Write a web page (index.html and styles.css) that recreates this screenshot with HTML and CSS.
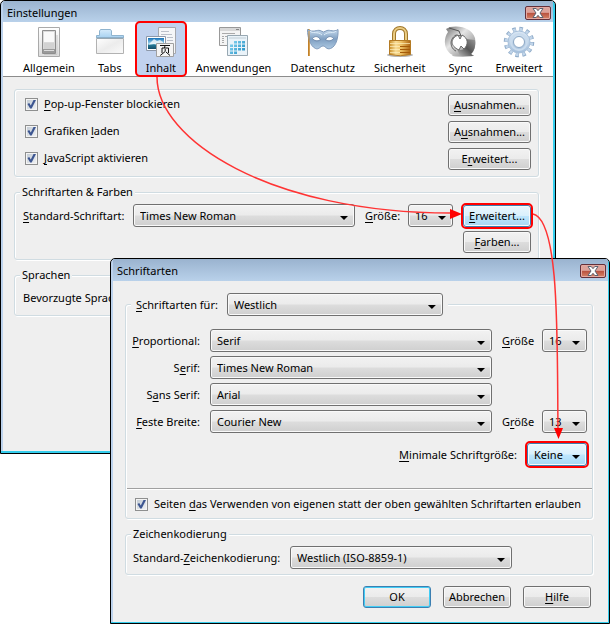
FILE: index.html
```html
<!DOCTYPE html>
<html lang="de">
<head>
<meta charset="utf-8">
<title>Einstellungen</title>
<link rel="stylesheet" href="styles.css">
</head>
<body>
<main class="desktop">
  <section class="window window-settings" aria-label="Einstellungen">
    <header class="titlebar">
      <h1>Einstellungen</h1>
      <button class="close" aria-label="Schließen"><svg width="12" height="10" viewBox="0 0 12 10"><path d="M1 .5h3.2L6 2.7 7.8.5H11L8 5l3 4.500H7.800L6 7.300 4.200 9.500H1L4 5z" fill="#fff" stroke="#5c6270"/></svg></button>
    </header>
    <nav class="toolbar">
      <button class="tool">
        <svg width="32" height="32" viewBox="0 0 32 32"><defs><linearGradient id="g1" x2="0" y2="1"><stop stop-color="#fff"/><stop offset="1" stop-color="#dcdcdc"/></linearGradient></defs><path d="M5.500 1.500h21v29h-21z" fill="url(#g1)" stroke="#aaa"/><path d="M9.500 4.500h13v23h-13z" fill="#dadada" stroke="#8e8e8e"/><path d="M11 6h10v10H11z" fill="#f9f9f9"/><path d="M11 17h10v6H11z" fill="#d2d2d2"/><path d="M10 23h12v4H10z" fill="#9a9a9a"/><path d="M11 24.500h10" stroke="#ddd"/><path d="M11 28.500h13V9" fill="none" stroke="#c9c9c9"/></svg>
        <span>Allgemein</span>
      </button>
      <button class="tool">
        <svg width="32" height="32" viewBox="0 0 32 32"><defs><linearGradient id="g2" x2="1" y2="1"><stop stop-color="#fff"/><stop offset=".5" stop-color="#ececec"/><stop offset="1" stop-color="#fafafa"/></linearGradient><linearGradient id="g2b" x2="0" y2="1"><stop stop-color="#d5ebfb"/><stop offset="1" stop-color="#a5d0f0"/></linearGradient></defs><path d="M2.500 12V9.500h3V5l1-1.500h10l1 1.500v4.500h12V12z" fill="url(#g2b)" stroke="#8fb4cf"/><path d="M2.500 12.500h27v15h-27z" fill="url(#g2)" stroke="#b2b2b2"/><path d="M3 12h26" stroke="#7f9db4"/></svg>
        <span>Tabs</span>
      </button>
      <button class="tool tool-active">
        <svg width="32" height="32" viewBox="0 0 32 32"><defs><linearGradient id="g3" x2="0" y2="1"><stop stop-color="#1771b8"/><stop offset=".55" stop-color="#a8dcf2"/><stop offset=".6" stop-color="#267b99"/><stop offset="1" stop-color="#134c68"/></linearGradient></defs><path d="M13.500 1.500h17v26h-17z" fill="#f5f6f8" stroke="#a6a8ae"/><path d="M16 5.500h8M16 8.500h11M22 11.500h6M22 14.500h6" stroke="#bcc0ca"/><path d="M1.500 10.500h19v14h-19z" fill="#fff" stroke="#8d98aa"/><path d="M3 12h16v11H3z" fill="url(#g3)"/><path d="M6 16l3-3 3 2 3-1 3 2v2l-5 1-4-1-6 1z" fill="#fff" opacity=".75"/><path d="M11.500 17.500h17v13h-17z" fill="#f4f4f4" stroke="#a0a0a0"/><path d="M15 19.500h10M20 19.500l-.5 2.500M17 27v-5h6.500v5M20.200 23v2.500l-5 4M21 26l4 3.500" fill="none" stroke="#111"/></svg>
        <span>Inhalt</span>
      </button>
      <button class="tool">
        <svg width="32" height="32" viewBox="0 0 32 32"><defs><linearGradient id="g4" x1="11" y1="15" x2="28" y2="29" gradientUnits="userSpaceOnUse"><stop stop-color="#8edaf5"/><stop offset="1" stop-color="#1686bd"/></linearGradient></defs><path d="M1.500 1.500h21v18h-21z" fill="#f4f4f4" stroke="#999"/><path d="M2 2h20v3H2z" fill="#d8d8d8"/><path d="M18 3.500h3" stroke="#888"/><path d="M4 7.500h13M4 10.500h2M7 10.500h4M4 12.500h2M4 14.500h2M4 16.500h2" stroke="#aaa"/><path d="M9.500 9.500h20v20h-20z" fill="#eaf3f9" stroke="#98a8b2"/><path d="M11 11h17v2H11z" fill="#d5e0e7"/><path d="M16 16.200h11M12 19.700h15M12 23.200h15M12 26.700h8" stroke="url(#g4)" stroke-width="2.500" stroke-dasharray="3 1"/></svg>
        <span>Anwendungen</span>
      </button>
      <button class="tool">
        <svg width="34" height="32" viewBox="0 0 34 32"><defs><linearGradient id="g5" x2="0" y2="1"><stop stop-color="#c7daed"/><stop offset=".5" stop-color="#7f9fc2"/><stop offset="1" stop-color="#adc9e2"/></linearGradient></defs><path d="M3 3v27" stroke="#b97822" stroke-width="2"/><path d="M3.500 3v27" stroke="#e2b568"/><path d="M1.500 3.500C7 7 11 3.500 14 4.500l3.500 1.500L21 4.500c3-1 7 2 11-1 .5 7-1.500 17-7.500 19-4 1.500-5-2.500-7.500-2.500s-4 4-7.500 2.500C4 20 1.500 11 1.500 3.500z" fill="url(#g5)" stroke="#7f9abb"/><path d="M6.500 12.500c2.500-3 6-2.500 8 1.500-3.500 1.500-6 1-8-1.500zM27.500 12.500c-2.500-3-6-2.500-8 1.500 3.500 1.500 6 1 8-1.500z" fill="#fff" stroke="#6c88ab"/><path d="M4 5c2 3 8 0 12 4M30 5c-2 3-8 0-12 4" fill="none" stroke="#dcebf8"/><path d="M3 5v25" stroke="#c98a35"/></svg>
        <span>Datenschutz</span>
      </button>
      <button class="tool">
        <svg width="32" height="32" viewBox="0 0 32 32"><defs><linearGradient id="g6"><stop stop-color="#c98e28"/><stop offset=".3" stop-color="#f7dc96"/><stop offset=".55" stop-color="#eec266"/><stop offset="1" stop-color="#ad6410"/></linearGradient></defs><ellipse cx="16" cy="29" rx="13" ry="2" fill="#b6b6b6"/><path d="M10 16V8c0-8 12-8 12 0v8" fill="none" stroke="#a0772b" stroke-width="4"/><path d="M10 16V8c0-8 12-8 12 0v8" fill="none" stroke="#eacb82" stroke-width="2"/><path d="M5.500 14.500h21v14q-10 2.500-21 0z" fill="url(#g6)" stroke="#b47b24"/><path d="M6 17.500h20M6 20.500h20M6 23.500h20M6 26.500h20" stroke="#fff0bd" opacity=".7"/><path d="M16 20.500h10M16 23.500h10M16 26.500h10" stroke="#a55b09"/></svg>
        <span>Sicherheit</span>
      </button>
      <button class="tool">
        <svg width="32" height="32" viewBox="0 0 32 32"><defs><linearGradient id="g7" x2="1" y2="1"><stop stop-color="#686868"/><stop offset=".4" stop-color="#e6e6e6"/><stop offset="1" stop-color="#777"/></linearGradient><linearGradient id="g7b" x1="1" x2="0" y2="1"><stop stop-color="#999"/><stop offset=".5" stop-color="#555"/><stop offset="1" stop-color="#bbb"/></linearGradient></defs><ellipse cx="19" cy="29.500" rx="11" ry="1.500" fill="#bbb"/><path d="M16 30C2 31-3 16 4 6L2 3l4-2C18-1 28 3 31 12c1 7 0 13-4 16l3 2z" fill="url(#g7)"/><path d="M31 14c1 6-1 11-4 14l2 2H16l-3-7 3 1c6 0 8-6 6-11z" fill="url(#g7b)"/><path d="M5 2l10 3 2 5-5-1C4 14 7 23 12 25" fill="none" stroke="#555"/><path d="M14 9l2 4 2-4c6 3 7 9 2 14l-3-3-2 4c-9-4-9-11-1-15z" fill="#fff" stroke="#666"/></svg>
        <span>Sync</span>
      </button>
      <button class="tool">
        <svg width="32" height="32" viewBox="0 0 32 32"><defs><linearGradient id="g8" x2="0" y2="1"><stop stop-color="#dbe8f5"/><stop offset="1" stop-color="#a3bedb"/></linearGradient></defs><g fill="none"><circle cx="16" cy="16" r="13" stroke="#8fabc8" stroke-width="4.500" stroke-dasharray="3.400 3.407"/><circle cx="16" cy="16" r="12.500" stroke="#c1d5ea" stroke-width="3.500" stroke-dasharray="2.400 4.145" stroke-dashoffset="-.5"/></g><circle cx="16" cy="16" r="11" fill="url(#g8)" stroke="#a8c0da"/><circle cx="16" cy="16" r="8" fill="none" stroke="#c9dbed" stroke-width="2"/><circle cx="16" cy="16" r="5.500" fill="#fff" stroke="#8ba7c4"/></svg>
        <span>Erweitert</span>
      </button>
    </nav>
    <div class="pane">
      <fieldset class="group group-plain">
        <div class="option-row"><label class="check"><input type="checkbox" checked><span><u>P</u>op-up-Fenster blockieren</span></label><button class="btn btn-wide"><span><u>A</u>usnahmen...</span></button></div>
        <div class="option-row"><label class="check"><input type="checkbox" checked><span>Grafiken <u>l</u>aden</span></label><button class="btn btn-wide"><span>A<u>u</u>snahmen...</span></button></div>
        <div class="option-row"><label class="check"><input type="checkbox" checked><span><u>J</u>avaScript aktivieren</span></label><button class="btn btn-wide"><span>E<u>r</u>weitert...</span></button></div>
      </fieldset>
      <fieldset class="group">
        <legend>Schriftarten &amp; Farben</legend>
        <div class="font-grid">
          <label for="std-font"><u>S</u>tandard-Schriftart:</label>
          <div class="select"><select id="std-font"><option>Times New Roman</option></select></div>
          <label for="std-size"><u>G</u>röße:</label>
          <div class="select"><select id="std-size"><option>16</option></select></div>
          <button class="btn btn-hot marked"><span><u>E</u>rweitert...</span></button>
          <button class="btn last-column"><span><u>F</u>arben...</span></button>
        </div>
      </fieldset>
      <fieldset class="group">
        <legend>Sprachen</legend>
        <div class="text-row">Bevorzugte Sprachen</div>
      </fieldset>
    </div>
  </section>

  <section class="window window-fonts" aria-label="Schriftarten">
    <header class="titlebar">
      <h2>Schriftarten</h2>
      <button class="close" aria-label="Schließen"><svg width="12" height="10" viewBox="0 0 12 10"><path d="M1 .5h3.200L6 2.700 7.800.5H11L8 5l3 4.500H7.800L6 7.300 4.200 9.500H1L4 5z" fill="#fff" stroke="#5c6270"/></svg></button>
    </header>
    <div class="pane pane-fonts">
      <fieldset class="group">
        <legend class="legend-select">
          <label for="script"><u>S</u>chriftarten für:</label>
          <span class="select"><select id="script"><option>Westlich</option></select></span>
        </legend>
        <div class="family-grid">
          <label class="family" for="prop"><u>P</u>roportional:</label>
          <div class="select"><select id="prop"><option>Serif</option></select></div>
          <label for="prop-size"><u>G</u>röße</label>
          <div class="select"><select id="prop-size"><option>16</option></select></div>
          <label class="family" for="serif">S<u>e</u>rif:</label>
          <div class="select"><select id="serif"><option>Times New Roman</option></select></div>
          <label class="family" for="sans">S<u>a</u>ns Serif:</label>
          <div class="select"><select id="sans"><option>Arial</option></select></div>
          <label class="family" for="mono"><u>F</u>este Breite:</label>
          <div class="select"><select id="mono"><option>Courier New</option></select></div>
          <label for="mono-size">G<u>r</u>öße</label>
          <div class="select"><select id="mono-size"><option>13</option></select></div>
        </div>
        <div class="minimum-row">
          <label for="min-size"><u>M</u>inimale Schriftgröße:</label>
          <div class="select select-hot marked"><select id="min-size"><option>Keine</option></select></div>
        </div>
        <hr>
        <div class="option-row allow-row"><label class="check"><input type="checkbox" checked><span>Seiten <u>d</u>as Verwenden von eigenen statt der oben gewählten Schriftarten erlauben</span></label></div>
      </fieldset>
      <fieldset class="group">
        <legend>Zeichenkodierung</legend>
        <div class="encoding-row">
          <label for="enc">Standard-<u>Z</u>eichenkodierung:</label>
          <div class="select"><select id="enc"><option>Westlich (ISO-8859-1)</option></select></div>
        </div>
      </fieldset>
      <footer class="actions">
        <button class="btn btn-default">OK</button>
        <button class="btn">Abbrechen</button>
        <button class="btn"><span><u>H</u>ilfe</span></button>
      </footer>
    </div>
  </section>

  <svg class="arrows" width="610" height="624" viewBox="0 0 610 624" aria-hidden="true">
    <path d="M157 77C157 140 270 213 451 213M533 214C560 220 557 340 558 430" fill="none" stroke="#f33" stroke-width="1.500"/>
    <path d="M450 209v10l12-5zM554 428h9l-4.500 11z" fill="#f00"/>
  </svg>
</main>
</body>
</html>
```
FILE: styles.css
```css
* {
  box-sizing: border-box;
}

body {
  margin: 0;
  background: #fff;
  color: #000;
  font: 11px/16px "Noto Sans", "Open Sans", sans-serif;
}

button,
select,
input {
  font: inherit;
  color: inherit;
  margin: 0;
}

u {
  text-underline-offset: 2px;
  text-decoration-skip-ink: none;
}

.desktop {
  position: relative;
  min-height: 100vh;
}

.window {
  position: absolute;
  border: 1px solid #000;
  border-radius: 5px 5px 0 0;
  background: #efefef;
  box-shadow: inset -2px -2px #35cdec, inset 2px 0 #bcd2ec;
  padding: 0 2px 2px;
  overflow: hidden;
}

.window-settings {
  top: 0;
  left: 0;
  right: 54px;
}

.window-fonts {
  top: 258px;
  left: 110px;
  right: 0;
  padding-right: 1px;
  padding-bottom: 1px;
  box-shadow: inset -1px -1px #35cdec, inset 2px 0 #bcd2ec;
}

.titlebar {
  display: flex;
  justify-content: space-between;
  align-items: center;
  height: 22px;
  padding: 2px 2px 0 4px;
  background: linear-gradient(#9ab3cf, #b9d1ea);
}

.window-settings .titlebar {
  height: 21px;
}

.titlebar h1,
.titlebar h2 {
  margin: 0;
  font-size: 11px;
  font-weight: 400;
}

.close {
  display: flex;
  align-items: center;
  justify-content: center;
  width: 26px;
  height: 14px;
  padding: 0;
  border: 1px solid #63303a;
  border-radius: 2px;
  box-shadow: inset 0 0 0 1px #e5aaa2;
  background: linear-gradient(#dda39b 45%, #b8503e 50%, #d78569);
}

.toolbar {
  display: flex;
  gap: 1px;
  height: 55px;
  padding-left: 11px;
  background: #fff;
  border-bottom: 1px solid #8c8c8c;
}

.tool {
  display: flex;
  flex-direction: column;
  align-items: center;
  flex: none;
  min-width: 50px;
  height: 54px;
  padding: 4px 9px 0;
  border: 0;
  background: none;
}

.tool span {
  margin-top: 2px;
}

.tool-active {
  background: #c1d2ee;
  border-radius: 4px;
  outline: 2px solid #f00;
  outline-offset: -1px;
}

.pane {
  min-height: 374px;
  padding: 12px 14px 0 11px;
}

.pane-fonts {
  min-height: 0;
  padding: 12px 15px 14px 12px;
}

.group {
  min-width: 0;
  margin: 0 0 7px;
  padding: 4px 0 6px 1px;
  border: 1px solid #d0dce2;
  border-radius: 3px;
  box-shadow: inset 1px 1px #fff, 1px 1px #fff;
}

legend {
  margin-left: 4px;
  padding: 0 2px;
  background: #efefef;
}

.option-row {
  display: flex;
  justify-content: space-between;
  align-items: center;
  height: 22px;
  padding: 0 7px 0 9px;
}

.option-row + .option-row {
  margin-top: 5px;
}

.check {
  display: flex;
  align-items: center;
  gap: 6px;
  height: 20px;
  align-self: flex-start;
  white-space: nowrap;
}

.check input {
  appearance: none;
  position: relative;
  width: 13px;
  height: 13px;
  border: 1px solid #8e8f8f;
  background: linear-gradient(135deg, #bfc8d2, #f4f5f6);
  box-shadow: inset 0 0 0 1px #f4f4f4;
}

.check input:checked::after {
  content: "";
  position: absolute;
  inset: 1px;
  background: #3d5691;
  clip-path: polygon(5% 50%, 25% 40%, 42% 66%, 75% 0, 100% 5%, 52% 100%, 35% 100%);
}

.btn {
  height: 22px;
  padding: 0 2px;
  border: 1px solid #707070;
  border-radius: 3px;
  background: linear-gradient(#f2f2f2, #ebebeb 49%, #dddddd 51%, #cfcfcf);
  box-shadow: inset 0 0 0 1px #f9f9f9;
  line-height: 18px;
  white-space: nowrap;
}

.btn-wide {
  width: 83px;
}

.btn-default {
  border-color: #3c7fb1;
  box-shadow: inset 0 0 0 1px #42cdf5;
}

.btn-hot {
  border-color: #3c7fb1;
  background: linear-gradient(#eaf6fd, #d9f0fc 49%, #bee6fd 51%, #a7d9f5);
}

.marked {
  outline: 2px solid #f00;
}

.select {
  position: relative;
  display: block;
  height: 23px;
}

.select select {
  appearance: none;
  display: block;
  width: 100%;
  height: 100%;
  padding: 0 6px;
  border: 1px solid #707070;
  border-radius: 3px;
  background: linear-gradient(#f2f2f2, #ebebeb 49%, #dddddd 51%, #cfcfcf);
  box-shadow: inset 0 0 0 1px #f9f9f9;
}

.select::after {
  content: "";
  position: absolute;
  right: 7px;
  top: 12px;
  width: 8px;
  height: 4px;
  background: #000;
  clip-path: polygon(0 0, 100% 0, 50% 100%);
  pointer-events: none;
}

.select-hot {
  border-radius: 3px;
}

.select-hot select {
  border-color: #3c7fb1;
  background: linear-gradient(#eaf6fd, #d9f0fc 49%, #bee6fd 51%, #a7d9f5);
}

.font-grid {
  display: grid;
  grid-template-columns: 100px 1fr 33px 45px 68px;
  gap: 4px 10px;
  align-items: center;
  padding: 0 7px;
  white-space: nowrap;
}

.last-column {
  grid-column: 5;
}

.text-row {
  padding: 3px 7px;
}

.legend-select {
  display: flex;
  align-items: center;
  gap: 9px;
  padding: 0 5px;
}

.legend-select .select {
  width: 216px;
}

.pane-fonts .group {
  padding-bottom: 5px;
}

.pane-fonts .group:first-child {
  padding-bottom: 2px;
}

.family-grid {
  display: grid;
  grid-template-columns: 67px 1fr 30px 45px;
  gap: 4px 10px;
  align-items: center;
  padding: 9px 5px 0 6px;
  white-space: nowrap;
}

.family {
  grid-column: 1;
  justify-self: end;
}

.minimum-row {
  display: flex;
  justify-content: flex-end;
  align-items: center;
  gap: 10px;
  margin-top: 10px;
  padding-right: 5px;
}

.minimum-row .select {
  width: 60px;
}

hr {
  margin: 22px 0 4px;
  border: 0;
  border-top: 1px solid #a0a0a0;
  border-bottom: 1px solid #fff;
}

.allow-row {
  padding: 0 0 0 8px;
}

.encoding-row {
  display: grid;
  grid-template-columns: 147px 222px;
  gap: 10px;
  align-items: center;
  padding-left: 6px;
  white-space: nowrap;
}

.actions {
  display: flex;
  justify-content: flex-end;
  gap: 12px;
  margin-top: 11px;
  padding-right: 2px;
}

.actions .btn {
  width: 68px;
}

.arrows {
  position: absolute;
  top: 0;
  left: 0;
  pointer-events: none;
}
```
